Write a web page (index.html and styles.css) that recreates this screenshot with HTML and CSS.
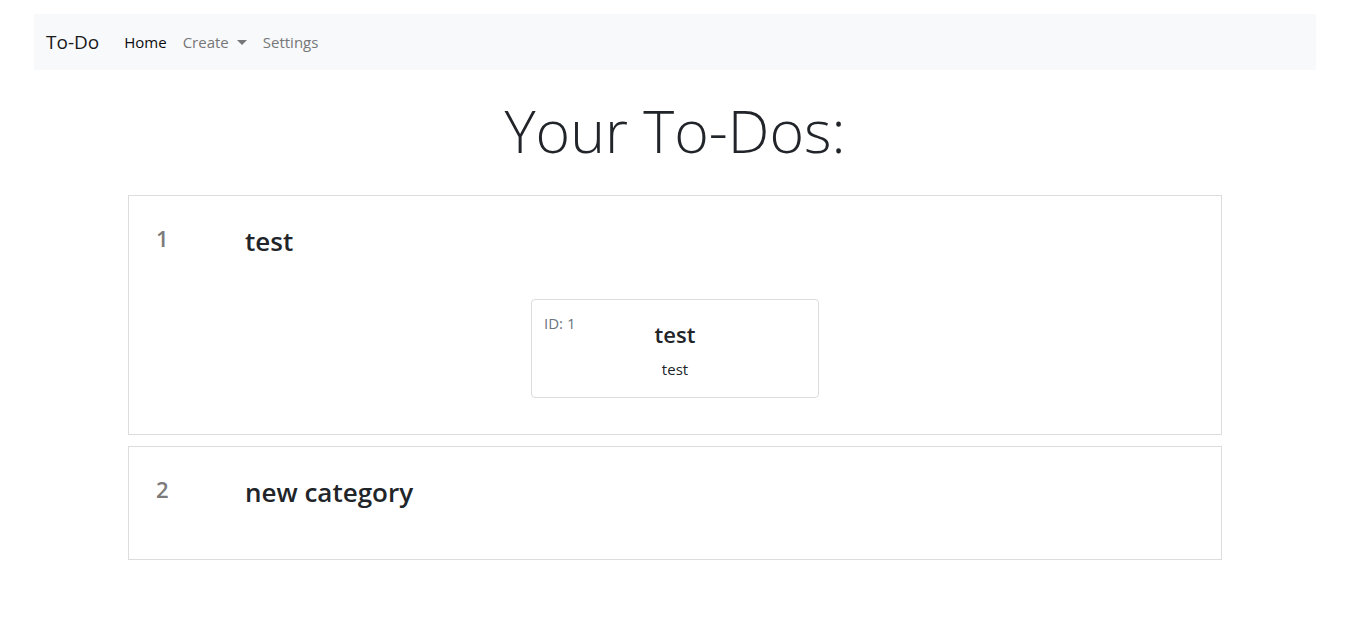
FILE: index.html
```html
<!DOCTYPE html>
<html lang="en">
<head>
<meta charset="utf-8">
<meta name="viewport" content="width=device-width, initial-scale=1">
<title>To-Do</title>
<link rel="stylesheet" href="styles.css">
</head>
<body>
<nav class="navbar" aria-label="Main">
  <a class="brand" href="#">To-Do</a>
  <a class="nav-link active" href="#">Home</a>
  <button class="nav-link toggle" type="button" aria-haspopup="true">Create<span class="caret"></span></button>
  <a class="nav-link" href="#">Settings</a>
</nav>
<main class="content">
  <h1 class="title">Your To-Dos:</h1>
  <section class="category">
    <div class="category-head">
      <span class="number">1</span>
      <h2 class="category-name">test</h2>
    </div>
    <article class="card">
      <span class="card-id">ID: 1</span>
      <div class="card-body">
        <h3 class="card-title">test</h3>
        <p class="card-text">test</p>
      </div>
    </article>
  </section>
  <section class="category">
    <div class="category-head">
      <span class="number">2</span>
      <h2 class="category-name">new category</h2>
    </div>
  </section>
</main>
</body>
</html>
```
FILE: styles.css
```css
* { box-sizing: border-box; }
body {
  margin: 0;
  padding: 14px 34px;
  background: #fff;
  color: #212529;
  font: 16px/24px "Segoe UI", "Open Sans", "Noto Sans", sans-serif;
}
h1, h2, h3, p { margin: 0; }
.navbar {
  display: flex;
  align-items: center;
  height: 56px;
  padding: 0 12px;
  background: #f8f9fb;
}
.brand {
  margin-right: 17px;
  color: #1a1a1a;
  font-size: 19px;
  text-decoration: none;
}
.nav-link {
  padding: 8px;
  border: 0;
  background: none;
  color: #767778;
  font: inherit;
  font-size: 15px;
  text-decoration: none;
}
.active { color: #0c0c0c; }
.toggle {
  display: flex;
  align-items: center;
  gap: 8px;
}
.caret {
  border: 5px solid transparent;
  border-top-color: currentColor;
  border-bottom: 0;
}
.content {
  display: flex;
  flex-direction: column;
  gap: 11px;
  padding: 24px 94px;
}
.title {
  margin-bottom: 18px;
  font-size: 59px;
  font-weight: 300;
  line-height: 72px;
  text-align: center;
}
.category {
  padding: 28px 27px 36px;
  border: 1px solid #dcdcdc;
}
.category-head {
  display: flex;
  min-height: 48px;
}
.number {
  width: 89px;
  color: #7b7b7b;
  font-size: 22px;
  font-weight: 600;
  line-height: 28px;
}
.category-name {
  font-size: 26px;
  font-weight: 600;
  line-height: 34px;
}
.card {
  position: relative;
  width: 288px;
  margin: 27px auto 0;
  padding: 16px 12px;
  border: 1px solid #dcdcdc;
  border-radius: 4px;
  text-align: center;
}
.card-id {
  position: absolute;
  top: 11px;
  left: 12px;
  color: #6c757d;
  font-size: 15px;
}
.card-title {
  margin-bottom: 5px;
  font-size: 22px;
  font-weight: 600;
  line-height: 36px;
}
.card-text { font-size: 15px; }
```
